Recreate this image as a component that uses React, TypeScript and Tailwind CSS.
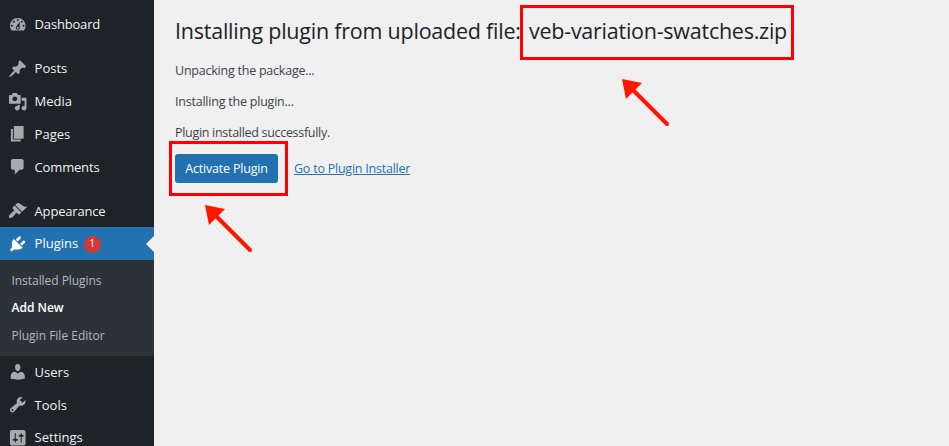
import React from 'react';

const icons = {
  dashboard:
    'M3.76 16h12.48c1.1-1.37 1.76-3.11 1.76-5 0-4.42-3.58-8-8-8s-8 3.58-8 8c0 1.89.66 3.63 1.76 5zM10 4c.55 0 1 .45 1 1s-.45 1-1 1-1-.45-1-1 .45-1 1-1zM6 6c.55 0 1 .45 1 1s-.45 1-1 1-1-.45-1-1 .45-1 1-1zm8 0c.55 0 1 .45 1 1s-.45 1-1 1-1-.45-1-1 .45-1 1-1zm-5.37 5.55L12 7v6c0 1.1-.9 2-2 2s-2-.9-2-2c0-.57.24-1.08.63-1.45zM4 10c.55 0 1 .45 1 1s-.45 1-1 1-1-.45-1-1 .45-1 1-1zm12 0c.55 0 1 .45 1 1s-.45 1-1 1-1-.45-1-1 .45-1 1-1zm-5 3c0-.55-.45-1-1-1s-1 .45-1 1 .45 1 1 1 1-.45 1-1z',
  posts:
    'M10.44 3.02l1.82-1.82 6.36 6.35-1.83 1.82c-1.05-.68-2.48-.57-3.41.36l-.75.75c-.92.93-1.04 2.35-.35 3.41l-1.83 1.82-2.41-2.41-2.8 2.79c-.42.42-3.38 2.71-3.8 2.29s1.86-3.39 2.28-3.81l2.79-2.79L4.1 9.36l1.83-1.82c1.05.69 2.48.57 3.4-.36l.75-.75c.93-.92 1.05-2.35.36-3.41z',
  media:
    'M13 11V4c0-.55-.45-1-1-1h-1.67L9 1H5L3.67 3H2c-.55 0-1 .45-1 1v7c0 .55.45 1 1 1h10c.55 0 1-.45 1-1zM7 4.5c1.38 0 2.5 1.12 2.5 2.5S8.38 9.5 7 9.5 4.5 8.38 4.5 7 5.62 4.5 7 4.5zM14 6h5v10.5c0 1.38-1.12 2.5-2.5 2.5S14 17.88 14 16.5s1.12-2.5 2.5-2.5c.17 0 .34.02.5.05V9h-3V6zm-4 8.05V13h2v3.5c0 1.38-1.12 2.5-2.5 2.5S7 17.88 7 16.5 8.12 14 9.5 14c.17 0 .34.02.5.05z',
  pages: 'M6 15V2h10v13H6zm-1 1h8v2H3V5h2v11z',
  comments: 'M5 2h9c1.1 0 2 .9 2 2v7c0 1.1-.9 2-2 2h-2l-5 5v-5H5c-1.1 0-2-.9-2-2V4c0-1.1.9-2 2-2z',
  appearance:
    'M14.48 11.06L7.41 3.99l1.5-1.5c.5-.56 2.3-.47 3.51.32 1.21.8 1.43 1.28 2.91 2.1 1.18.64 2.45 1.26 4.45.85zm-.71.71L6.7 4.7 4.93 6.47c-.39.39-.39 1.02 0 1.41l1.06 1.06c.39.39.39 1.03 0 1.42-.6.6-1.43 1.11-2.21 1.69-.35.26-.7.53-1.01.84C1.43 14.23.4 16.08 1.4 17.07c.99 1 2.84-.03 4.18-1.36.31-.31.58-.66.85-1.02.57-.78 1.08-1.61 1.69-2.21.39-.39 1.02-.39 1.41 0l1.06 1.06c.39.39 1.02.39 1.41 0z',
  plugins:
    'M13.11 4.36L9.87 7.6 8 5.73l3.24-3.24c.35-.34 1.05-.2 1.56.32.52.51.66 1.21.31 1.55zm-8 1.77l.91-1.12 9.01 9.01-1.19.84c-.71.71-2.63 1.16-3.82 1.16H6.14L4.9 17.26c-.59.59-1.54.59-2.12 0-.59-.58-.59-1.53 0-2.12l1.24-1.24v-3.88c0-1.13.4-3.19 1.09-3.89zm7.26 3.97l3.24-3.24c.34-.35 1.04-.21 1.55.31.52.51.66 1.21.31 1.55l-3.24 3.25z',
  users:
    'M10 9.25c-2.27 0-2.73-3.44-2.73-3.44C7 4.02 7.82 2 9.97 2c2.16 0 2.98 2.02 2.71 3.81 0 0-.41 3.44-2.68 3.44zm0 2.57L12.72 10c2.39 0 4.52 2.33 4.52 4.53v2.49s-3.65 1.13-7.24 1.13c-3.65 0-7.24-1.13-7.24-1.13v-2.49c0-2.25 1.94-4.48 4.47-4.48z',
  tools:
    'M16.68 9.77c-1.34 1.34-3.3 1.67-4.95.99l-5.41 6.52c-.99.99-2.59.99-3.58 0s-.99-2.59 0-3.57l6.52-5.42c-.68-1.65-.35-3.61.99-4.95 1.28-1.28 3.12-1.62 4.72-1.06l-2.89 2.89 2.82 2.82 2.86-2.87c.53 1.58.18 3.39-1.08 4.65zM3.81 16.21c.4.39 1.04.39 1.43 0 .4-.4.4-1.04 0-1.43-.39-.4-1.03-.4-1.43 0-.39.39-.39 1.03 0 1.43z',
  settings:
    'M18 16V4c0-1.1-.9-2-2-2H4c-1.1 0-2 .9-2 2v12c0 1.1.9 2 2 2h12c1.1 0 2-.9 2-2zM8 11h1c.55 0 1 .45 1 1s-.45 1-1 1H8v1.5c0 .28-.22.5-.5.5s-.5-.22-.5-.5V13H6c-.55 0-1-.45-1-1s.45-1 1-1h1V5.5c0-.28.22-.5.5-.5s.5.22.5.5V11zm5-2h-1c-.55 0-1-.45-1-1s.45-1 1-1h1V5.5c0-.28.22-.5.5-.5s.5.22.5.5V7h1c.55 0 1 .45 1 1s-.45 1-1 1h-1v5.5c0 .28-.22.5-.5.5s-.5-.22-.5-.5V9z',
};

type ItemProps = {
  icon: keyof typeof icons;
  label: string;
  tracking?: string;
  active?: boolean;
  badge?: string;
};

function MenuItem({ icon, label, tracking = '', active = false, badge }: ItemProps) {
  return (
    <a
      className={`relative flex h-[32.8px] shrink-0 items-center pl-[7.5px] text-[13px] ${
        active ? 'bg-[#2271b1] text-white' : 'text-[#f0f0f1]'
      }`}
    >
      <svg
        viewBox="0 0 20 20"
        className={`mr-[7.6px] size-[19.5px] shrink-0 ${active ? 'fill-white' : 'fill-[#a7aaad]'}`}
      >
        <path fillRule="evenodd" d={icons[icon]} />
      </svg>
      <span className={`pt-[1px] ${tracking}`}>{label}</span>
      {badge && (
        <span className="ml-[5.5px] mt-[1px] flex size-[17px] items-center justify-center rounded-full bg-[#d63638] text-[10.5px] text-white">
          {badge}
        </span>
      )}
      {active && (
        <span className="absolute right-0 top-[8.5px] border-y-8 border-r-8 border-y-transparent border-r-[#f0f0f1]" />
      )}
    </a>
  );
}

function Arrow({ className }: { className: string }) {
  return (
    <svg viewBox="0 0 50 50" className={`absolute size-[50px] ${className}`}>
      <path d="M12 12L46 46" stroke="#ff1500" strokeWidth="4" strokeLinecap="round" />
      <path d="M1 1L21 5L5 21Z" fill="#ff1500" />
    </svg>
  );
}

export default function App() {
  return (
    <div className="relative flex h-[446px] w-[949px] overflow-hidden bg-[#f0f0f1] font-['Open_Sans',sans-serif]">
      <nav className="flex h-full w-[154px] shrink-0 flex-col overflow-hidden bg-[#1d2327] pt-[8px]">
        <MenuItem icon="dashboard" label="Dashboard" tracking="tracking-[-0.18px]" />
        <div className="h-[11.4px] shrink-0" />
        <MenuItem icon="posts" label="Posts" />
        <MenuItem icon="media" label="Media" />
        <MenuItem icon="pages" label="Pages" />
        <MenuItem icon="comments" label="Comments" tracking="tracking-[-0.17px]" />
        <div className="h-[11px] shrink-0" />
        <MenuItem icon="appearance" label="Appearance" tracking="tracking-[-0.19px]" />
        <MenuItem icon="plugins" label="Plugins" active badge="1" />
        <div className="flex h-[95.7px] shrink-0 flex-col bg-[#2c3338] pl-[11.5px] pt-[7px] text-[12px] leading-[27.4px] text-[#b4b8bc]">
          <a className="tracking-[-0.05px]">Installed Plugins</a>
          <a className="font-semibold text-white">Add New</a>
          <a>Plugin File Editor</a>
        </div>
        <MenuItem icon="users" label="Users" />
        <MenuItem icon="tools" label="Tools" />
        <MenuItem icon="settings" label="Settings" />
      </nav>
      <main className="flex flex-1 flex-col pl-[21px] pt-[16px] text-[12.5px] text-[#3c434a]">
        <h1 className="flex h-[30px] items-center whitespace-nowrap text-[21.5px] text-[#1d2327]">
          <span className="w-[354px] tracking-[-0.23px]">Installing plugin from uploaded file:</span>
          <span className="tracking-[-0.25px]">veb-variation-swatches.zip</span>
        </h1>
        <div className="mt-[9px] flex flex-col leading-[31px]">
          <p className="tracking-[-0.23px]">Unpacking the package...</p>
          <p className="tracking-[-0.22px]">Installing the plugin...</p>
          <p className="tracking-[-0.3px]">Plugin installed successfully.</p>
        </div>
        <div className="mt-[6px] flex items-center gap-[16px]">
          <button className="h-[29px] w-[103px] rounded-[3px] bg-[#2271b1] pt-[2px] text-center tracking-[-0.2px] text-white">
            Activate Plugin
          </button>
          <a className="pt-[2px] tracking-[-0.23px] text-[#2271b1] underline">Go to Plugin Installer</a>
        </div>
      </main>
      <div className="absolute left-[520px] top-[5px] h-[55px] w-[274px] border-[3px] border-[#ff0000]" />
      <div className="absolute left-[169px] top-[141px] h-[55px] w-[119px] border-[3px] border-[#ff0000]" />
      <Arrow className="left-[621px] top-[78px]" />
      <Arrow className="left-[204px] top-[204px]" />
    </div>
  );
}
